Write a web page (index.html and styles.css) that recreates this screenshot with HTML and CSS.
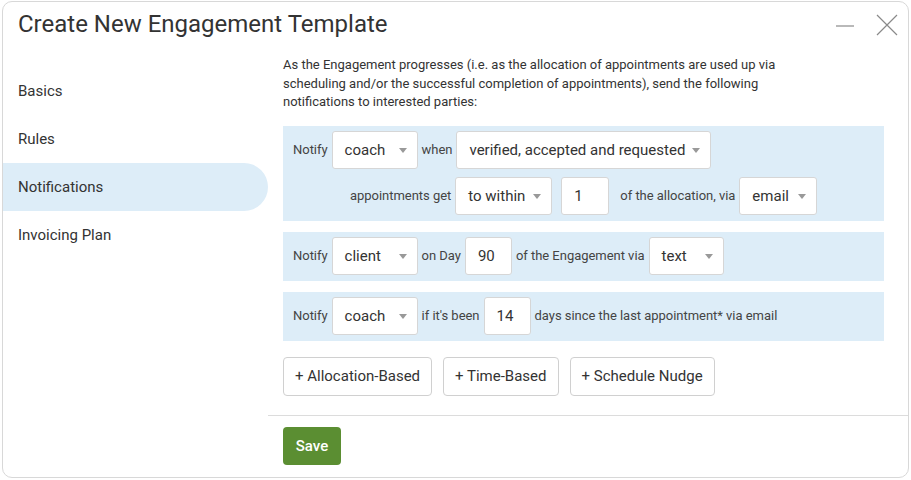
FILE: index.html
```html
<!DOCTYPE html>
<html lang="en">
<head>
    <meta charset="UTF-8">
    <meta name="viewport" content="width=device-width, initial-scale=1.0">
    <title>Create New Engagement Template</title>
    <link rel="stylesheet" href="styles.css">
</head>
<body>
    <div class="window">
        <div class="header">
            <h1>Create New Engagement Template</h1>
            <div class="window-controls">
                <svg width="20" height="20" viewBox="0 0 20 20"><line x1="1" y1="11" x2="19" y2="11" stroke="#8a8a8a" stroke-width="1.2"/></svg>
                <svg width="22" height="22" viewBox="0 0 22 22"><path d="M1 1 L21 21 M21 1 L1 21" stroke="#8a8a8a" stroke-width="1.2" fill="none"/></svg>
            </div>
        </div>

        <div class="body">
            <!-- menu lateral -->
            <div class="sidebar">
                <div class="nav-item">Basics</div>
                <div class="nav-item">Rules</div>
                <div class="nav-item active">Notifications</div>
                <div class="nav-item">Invoicing Plan</div>
            </div>

            <div class="main">
                <div class="content">
                    <p class="intro">As the Engagement progresses (i.e. as the allocation of appointments are used up via scheduling and/or the successful completion of appointments), send the following notifications to interested parties:</p>

                    <div class="rule">
                        <div class="rule-line">
                            <span class="label">Notify</span>
                            <div class="select w-who">coach<span class="arrow"></span></div>
                            <span class="label">when</span>
                            <div class="select w-status">verified, accepted and requested<span class="arrow"></span></div>
                        </div>
                        <div class="rule-line indent">
                            <span class="label">appointments get</span>
                            <div class="select w-within">to within<span class="arrow"></span></div>
                            <div class="input w-count spaced">1</div>
                            <span class="label spaced-left">of the allocation, via</span>
                            <div class="select w-email">email<span class="arrow"></span></div>
                        </div>
                    </div>

                    <div class="rule">
                        <div class="rule-line">
                            <span class="label">Notify</span>
                            <div class="select w-who">client<span class="arrow"></span></div>
                            <span class="label">on Day</span>
                            <div class="input w-num">90</div>
                            <span class="label">of the Engagement via</span>
                            <div class="select w-text">text<span class="arrow"></span></div>
                        </div>
                    </div>

                    <div class="rule">
                        <div class="rule-line">
                            <span class="label">Notify</span>
                            <div class="select w-who">coach<span class="arrow"></span></div>
                            <span class="label">if it's been</span>
                            <div class="input w-num">14</div>
                            <span class="label">days since the last appointment* via email</span>
                        </div>
                    </div>

                    <div class="add-buttons">
                        <button class="btn">+ Allocation-Based</button>
                        <button class="btn">+ Time-Based</button>
                        <button class="btn">+ Schedule Nudge</button>
                    </div>
                </div>

                <div class="footer">
                    <button class="btn-save">Save</button>
                </div>
            </div>
        </div>
    </div>
</body>
</html>
```

FILE: styles.css
```css
body {
    margin: 0;
    font-family: Roboto, "Liberation Sans", sans-serif;
    color: #333;
    background: #fff;
}

.window {
    margin: 1px 2px;
    width: 905px;
    height: 475px;
    border: 1px solid #d8d8d8;
    border-radius: 10px;
    display: flex;
    flex-direction: column;
}

.header {
    height: 47px;
    box-sizing: border-box;
    display: flex;
    align-items: center;
    justify-content: space-between;
    padding: 0 10px 4px 15px;
}

.header h1 {
    margin: 0;
    font-size: 24px;
    font-weight: 400;
    color: #333;
}

.window-controls {
    display: flex;
    align-items: center;
    gap: 21px;
    margin-top: 2px;
}

.body {
    flex: 1;
    display: flex;
}

/* menu lateral */
.sidebar {
    width: 265px;
    padding-top: 18px;
}

.nav-item {
    height: 48px;
    line-height: 48px;
    padding-left: 15px;
    font-size: 15px;
    color: #333;
    border-radius: 0 24px 24px 0;
}

.nav-item.active {
    background-color: #ddedf8;
}

.main {
    flex: 1;
    display: flex;
    flex-direction: column;
}

.content {
    flex: 1;
    padding: 7px 24px 0 15px;
    border-bottom: 1px solid #dcdcdc;
}

.intro {
    margin: 0 0 14px 0;
    font-size: 13px;
    line-height: 18.5px;
    color: #333;
    max-width: 500px;
}

.rule {
    background-color: #ddedf8;
    padding: 5px 10px 6px;
    margin-bottom: 11px;
}

.rule-line {
    display: flex;
    align-items: center;
    gap: 4px;
}

.rule-line + .rule-line {
    margin-top: 8px;
}

.rule-line.indent {
    padding-left: 57px;
}

.label {
    font-size: 13px;
    color: #444;
    letter-spacing: -0.03px;
}

.select, .input {
    height: 38px;
    box-sizing: border-box;
    background: #fff;
    border: 1px solid #d6d6d6;
    border-radius: 3px;
    font-size: 15px;
    color: #333;
    display: flex;
    align-items: center;
    padding-left: 12px;
    position: relative;
}

.arrow {
    position: absolute;
    right: 10px;
    top: 16px;
    border-left: 4px solid transparent;
    border-right: 4px solid transparent;
    border-top: 5px solid #999;
}

.w-who { width: 86px; }
.w-status { width: 255px; }
.w-within { width: 97px; }
.w-email { width: 78px; }
.w-text { width: 75px; }
.w-count { width: 48px; }
.w-num { width: 47px; }

.spaced { margin-left: 5px; }
.spaced-left { margin-left: 7px; }

.add-buttons {
    display: flex;
    gap: 11px;
    margin-top: 16px;
}

.btn {
    height: 39px;
    padding: 0 11px;
    background: #fff;
    border: 1px solid #d0d0d0;
    border-radius: 4px;
    font-family: Roboto, "Liberation Sans", sans-serif;
    font-size: 15px;
    color: #333;
}

.footer {
    height: 61px;
    padding: 11px 0 0 15px;
    box-sizing: border-box;
}

.btn-save {
    height: 38px;
    width: 58px;
    background: #5b8e32;
    border: none;
    border-radius: 4px;
    color: #fff;
    font-family: Roboto, "Liberation Sans", sans-serif;
    font-size: 15px;
    font-weight: 500;
}
```
